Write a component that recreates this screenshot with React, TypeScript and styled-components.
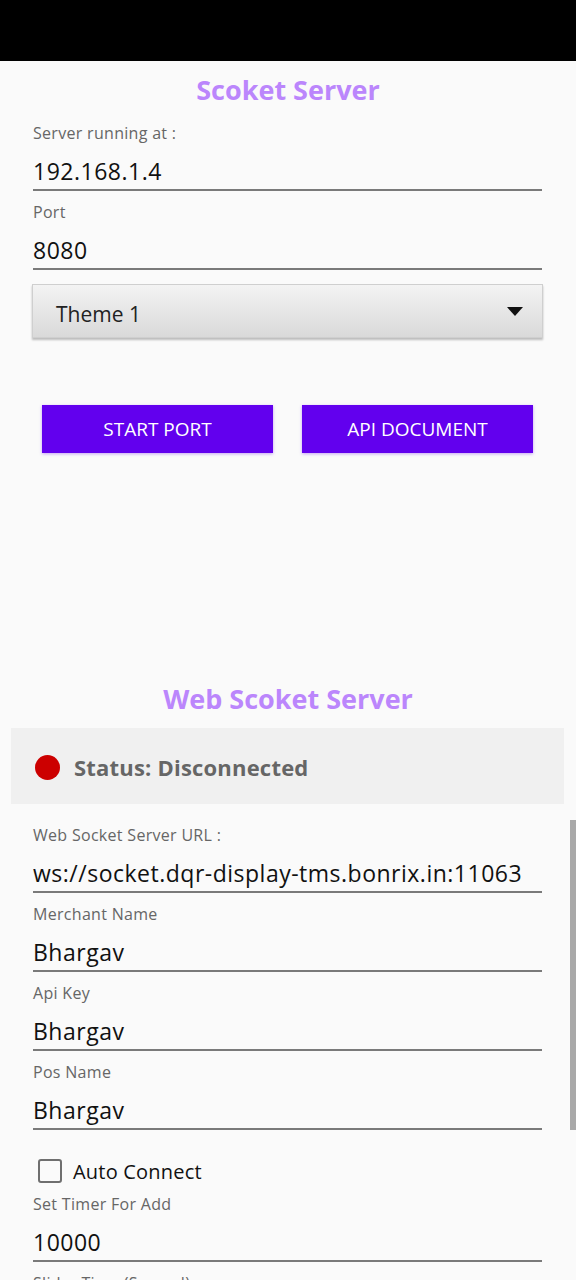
import styled, { createGlobalStyle } from 'styled-components'

const GlobalStyle = createGlobalStyle`
  html, body {
    margin: 0;
    padding: 0;
    background: #fafafa;
  }
  body {
    font-family: 'Open Sans', 'Noto Sans', sans-serif;
  }
`

const Screen = styled.div`
  position: relative;
  width: 576px;
  height: 1280px;
  overflow: hidden;
  background: #fafafa;
`

const StatusBar = styled.div`
  height: 61px;
  background: #000;
`

const Title = styled.div<{ mt: number }>`
  height: 40px;
  line-height: 40px;
  margin-top: ${({ mt }) => mt}px;
  text-align: center;
  font-size: 27px;
  font-weight: 700;
  color: #bb86fc;
`

const Form = styled.div<{ pt: number }>`
  display: flex;
  flex-direction: column;
  gap: 11px;
  padding: ${({ pt }) => pt}px 34px 0 33px;
`

const Field = styled.div`
  display: flex;
  flex-direction: column;
`

const Label = styled.div`
  height: 20px;
  line-height: 20px;
  font-size: 16px;
  letter-spacing: 0.3px;
  color: #666;
  white-space: nowrap;
`

const Value = styled.div`
  margin-top: 10px;
  height: 36px;
  line-height: 36px;
  font-size: 23px;
  letter-spacing: 0.5px;
  color: #111;
  border-bottom: 2px solid #7a7a7a;
  white-space: nowrap;
  overflow: hidden;
`

const Spinner = styled.div`
  display: flex;
  align-items: center;
  justify-content: space-between;
  height: 54px;
  margin: 3px -1px 0 -1px;
  padding: 6px 19px 0 23px;
  box-sizing: border-box;
  background: linear-gradient(#f3f3f3, #d9d9d9);
  border: 1px solid #cfcfcf;
  box-shadow: 0 2px 2px rgba(0, 0, 0, 0.25);
  font-size: 21px;
  color: #222;
`

const Arrow = styled.div`
  width: 0;
  height: 0;
  border-left: 8px solid transparent;
  border-right: 8px solid transparent;
  border-top: 9px solid #111;
  margin-top: -5px;
`

const ButtonRow = styled.div`
  display: flex;
  gap: 29px;
  padding: 67px 0 0 42px;
`

const Button = styled.div`
  width: 231px;
  height: 48px;
  display: flex;
  align-items: center;
  justify-content: center;
  background: #6200ee;
  color: #fff;
  font-size: 19px;
  text-transform: uppercase;
  box-shadow: 0 1px 3px rgba(98, 0, 238, 0.35);
`

const StatusBox = styled.div`
  display: flex;
  align-items: center;
  gap: 14px;
  height: 76px;
  margin: 9px 12px 0 11px;
  padding: 2px 0 0 24px;
  box-sizing: border-box;
  background: #f0f0f0;
`

const Dot = styled.div`
  width: 25px;
  height: 25px;
  border-radius: 50%;
  background: #cc0000;
`

const StatusText = styled.div`
  font-size: 22px;
  font-weight: 700;
  letter-spacing: 0.2px;
  color: #666;
`

const CheckRow = styled.div`
  display: flex;
  align-items: center;
  gap: 11px;
  height: 40px;
  margin: 10px 0 -8px 5px;
`

const CheckBox = styled.div`
  width: 24px;
  height: 24px;
  box-sizing: border-box;
  border: 2px solid #6f6f6f;
  border-radius: 3px;
`

const CheckLabel = styled.div`
  font-size: 20px;
  letter-spacing: 0.2px;
  color: #111;
`

const ScrollThumb = styled.div`
  position: absolute;
  right: 0;
  top: 820px;
  width: 6px;
  height: 310px;
  background: #a9a9a9;
`

const TextField = ({ label, value }: { label: string, value: string }) => (
  <Field>
    <Label>{label}</Label>
    <Value>{value}</Value>
  </Field>
)

const App = () => {
  return (
    <Screen>
      <GlobalStyle />
      <StatusBar />
      <Title mt={9}>Scoket Server</Title>
      <Form pt={13}>
        <TextField label="Server running at :" value="192.168.1.4" />
        <TextField label="Port" value="8080" />
        <Spinner>
          Theme 1
          <Arrow />
        </Spinner>
      </Form>
      <ButtonRow>
        <Button>Start Port</Button>
        <Button>Api Document</Button>
      </ButtonRow>
      <Title mt={226}>Web Scoket Server</Title>
      <StatusBox>
        <Dot />
        <StatusText>Status: Disconnected</StatusText>
      </StatusBox>
      <Form pt={21}>
        <TextField label="Web Socket Server URL :" value="ws://socket.dqr-display-tms.bonrix.in:11063" />
        <TextField label="Merchant Name" value="Bhargav" />
        <TextField label="Api Key" value="Bhargav" />
        <TextField label="Pos Name" value="Bhargav" />
        <CheckRow>
          <CheckBox />
          <CheckLabel>Auto Connect</CheckLabel>
        </CheckRow>
        <TextField label="Set Timer For Add" value="10000" />
        <TextField label="Slider Time (Second)" value="5" />
      </Form>
      <ScrollThumb />
    </Screen>
  )
}

export default App
